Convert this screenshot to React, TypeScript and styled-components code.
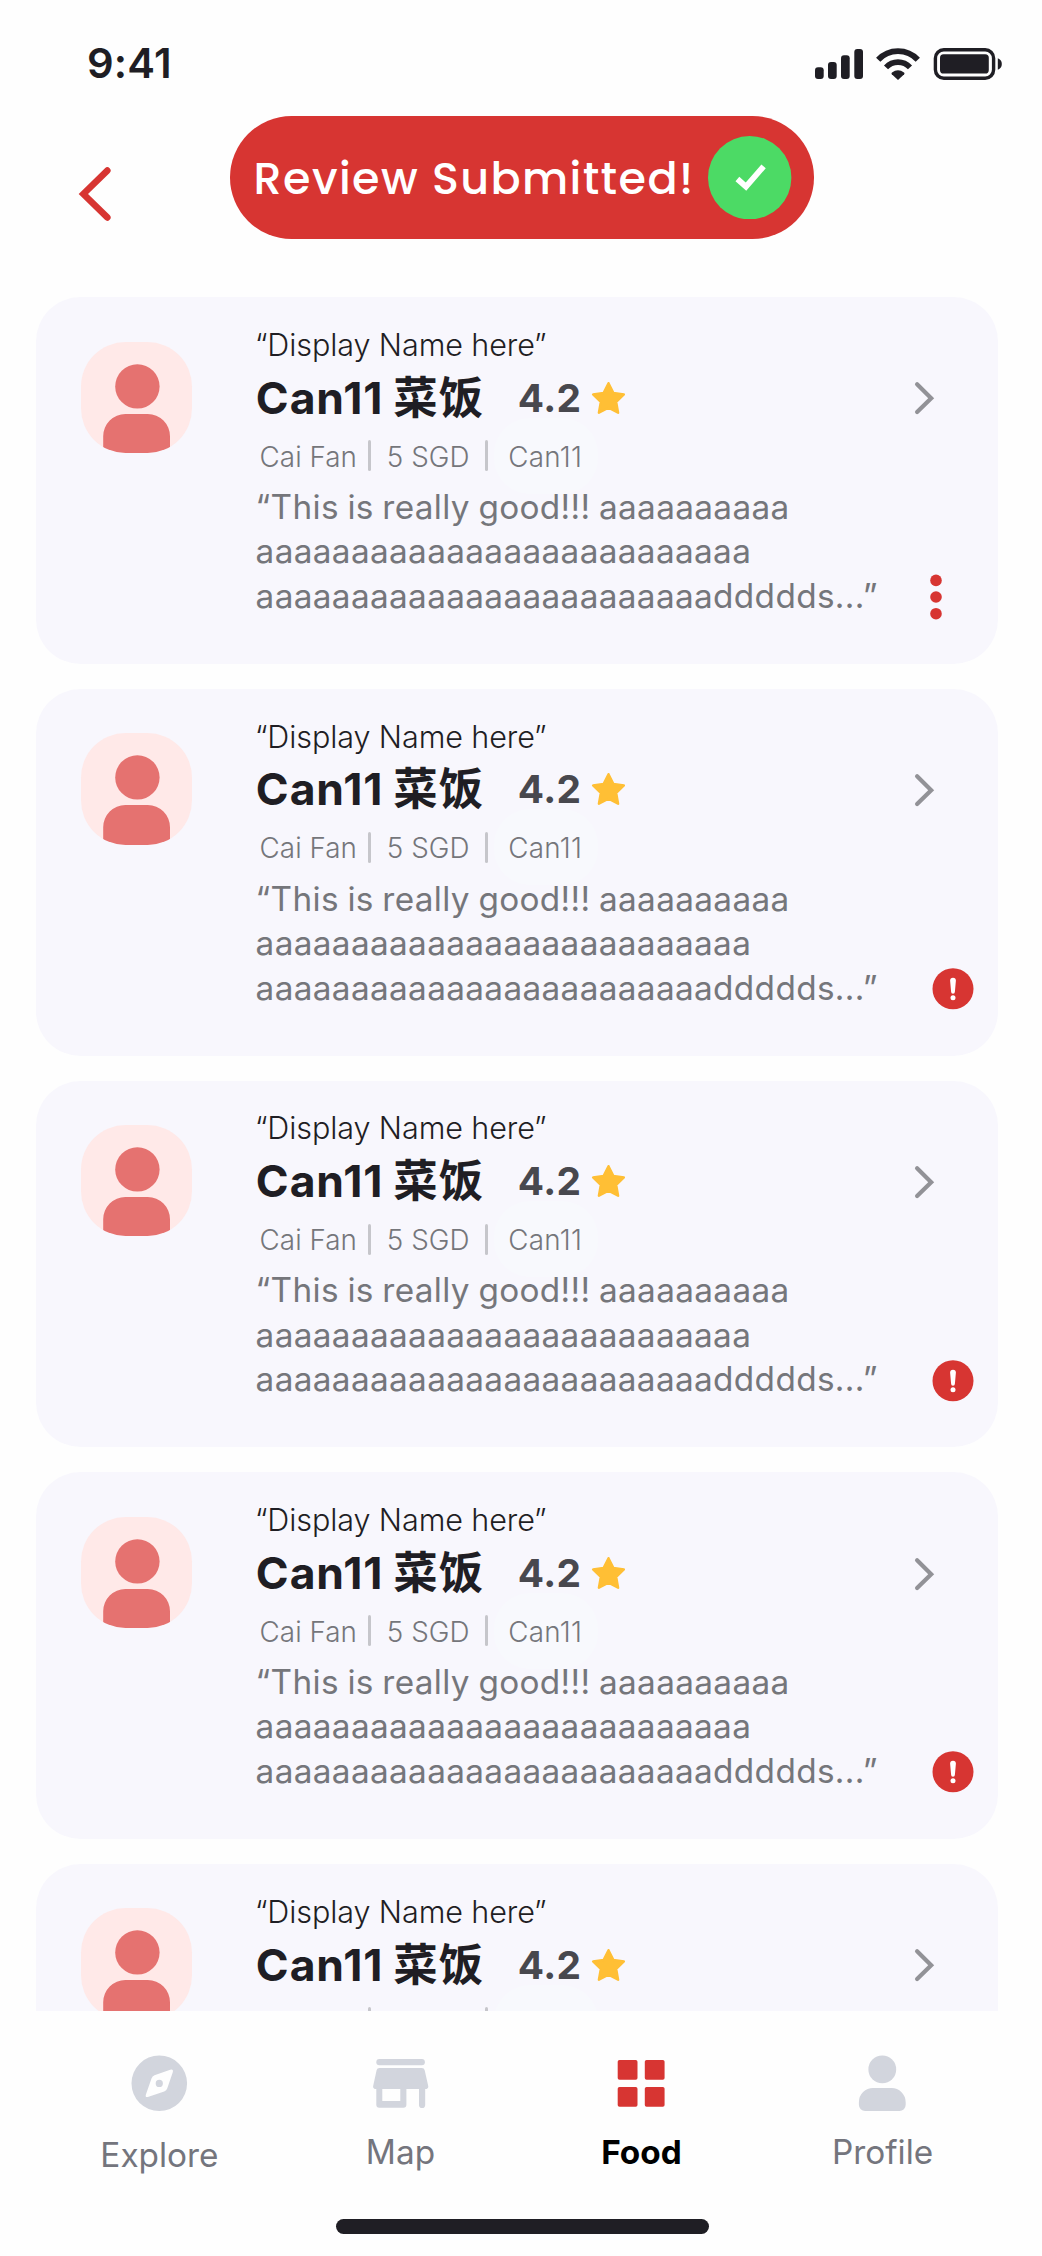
import React from "react";
import styled, { createGlobalStyle } from "styled-components";

const colors = {
  ink: "#1f1e24",
  red: "#d73532",
  card: "#f8f7fd",
  muted: "#75767b",
  navIdle: "#d2d5dd",
};

const GlobalStyle = createGlobalStyle`
  *, *::before, *::after { box-sizing: border-box; }
  body { margin: 0; background: #fefefe; }
`;

const Screen = styled.main`
  display: flex;
  flex-direction: column;
  width: 1042px;
  height: 2256px;
  overflow: hidden;
  background: #fefefe;
  color: ${colors.ink};
  font-family: Inter, "Noto Sans CJK SC", sans-serif;
`;

const StatusBar = styled.header`
  display: flex;
  justify-content: space-between;
  flex: none;
  height: 116.3px;
  padding: 48px 40px 0 87px;
`;

const Clock = styled.time`
  margin-top: -10px;
  font-size: 41.68px;
  line-height: 50px;
  font-weight: 600;
  letter-spacing: 0.2px;
`;

const StatusIcons = styled.svg`
  display: block;
  width: 187px;
  height: 32px;
`;

const TopBar = styled.div`
  display: flex;
  align-items: flex-start;
  flex: none;
  height: 181px;
  padding-left: 78px;
`;

const BackButton = styled.button`
  width: 34px;
  height: 56px;
  margin: 50px 118.3px 0 0;
  padding: 0;
  border: 0;
  background: none;

  svg { display: block; }
`;

const Toast = styled.div`
  display: flex;
  align-items: center;
  justify-content: space-between;
  width: 583.5px;
  height: 122.5px;
  padding: 0 22.2px 0 23.3px;
  border-radius: 62px;
  background: ${colors.red};
`;

const ToastText = styled.span`
  padding-top: 3px;
  color: #fff;
  font-family: Poppins, Inter, sans-serif;
  font-size: 44.46px;
  font-weight: 500;
  line-height: 60px;
  letter-spacing: 1.4px;
  white-space: nowrap;
`;

const Round = styled.svg`
  display: block;
  flex: none;
  width: 83.4px;
  height: 83.4px;
`;

const List = styled.section`
  display: flex;
  flex-direction: column;
  flex: none;
  gap: 24.9px;
  height: 1713.7px;
  padding: 0 44.5px 0 36.1px;
  overflow: hidden;
`;

const Card = styled.article`
  display: grid;
  grid-template-columns: 111.2px minmax(0, 1fr) 72px;
  column-gap: 63.2px;
  flex: none;
  height: 366.8px;
  padding-left: 44.5px;
  border-radius: 44.5px;
  background: ${colors.card};
`;

const Avatar = styled.svg`
  display: block;
  width: 111.2px;
  height: 111.2px;
  margin-top: 44.4px;
  border-radius: 44.5px;
  background: #ffe9e8;
`;

const Content = styled.div`
  padding-top: 25.7px;
  white-space: nowrap;
`;

const DisplayName = styled.div`
  font-size: 30.57px;
  font-weight: 300;
  line-height: 44.8px;
  letter-spacing: -0.1px;
`;

const TitleRow = styled.div`
  display: flex;
  align-items: center;
  height: 60px;
  padding-left: 0.9px;
`;

const Title = styled.h2`
  width: 262px;
  margin: 0;
  font-size: 44.46px;
  font-weight: 700;
  line-height: 60px;
  letter-spacing: 0.9px;
  word-spacing: -1.4px;
`;

const Rating = styled.span`
  margin-right: 9.4px;
  color: #48484e;
  font-size: 38.9px;
  font-weight: 700;
  line-height: 60px;
  letter-spacing: 0.3px;
`;

const Star = styled.svg`
  display: block;
  width: 35px;
  height: 34px;
`;

const Meta = styled.div`
  display: flex;
  align-items: center;
  height: 42px;
  margin-top: 8px;
  padding-left: 4.6px;
  color: ${colors.muted};
  font-size: 27.79px;
  font-weight: 300;
  line-height: 42px;
`;

const Tag = styled.span<{ $width: number; $halo?: boolean }>`
  position: relative;
  z-index: 0;
  width: ${(p) => p.$width}px;
  letter-spacing: ${(p) => (p.$halo ? 0.3 : 0.05)}px;

  &::before {
    content: "";
    display: ${(p) => (p.$halo ? "block" : "none")};
    position: absolute;
    z-index: -1;
    left: -14px;
    top: -18px;
    width: 104px;
    height: 76px;
    border-radius: 36px;
    background: #f8f9fd;
  }
`;

const Separator = styled.i<{ $after: number }>`
  width: 3px;
  height: 31px;
  margin: -2px ${(p) => p.$after}px 0 0;
  border-radius: 1.5px;
  background: #c6c6cb;
`;

const Review = styled.p`
  margin: 7.2px 0 0 0.6px;
  color: ${colors.muted};
  font-size: 33.34px;
  line-height: 44.46px;
  letter-spacing: 0.35px;
  word-spacing: -1.2px;
  white-space: pre;
`;

const Side = styled.div`
  display: flex;
  flex-direction: column;
  align-items: flex-start;
  height: 366.8px;
  margin-left: -34px;
  padding-top: 84.2px;
`;

const Chevron = styled.svg`
  display: block;
  width: 22px;
  height: 34px;
  margin-left: 22.5px;
`;

const Action = styled.button<{ $left: number }>`
  width: 42px;
  height: 48px;
  margin: 157.8px 0 0 ${(p) => p.$left}px;
  padding: 0;
  border: 0;
  background: none;

  svg { display: block; }
`;

const TabBar = styled.nav`
  display: grid;
  grid-template-columns: repeat(4, 1fr);
  flex: none;
  height: 208px;
  padding: 39px 38.9px 0;
`;

const Tab = styled.a<{ $active?: boolean; $gap?: number }>`
  display: flex;
  flex-direction: column;
  align-items: center;
  gap: ${(p) => p.$gap ?? 13.7}px;
  color: ${(p) => (p.$active ? "#000" : "#74757d")};
  font-size: 33.34px;
  font-weight: ${(p) => (p.$active ? 700 : 400)};
  line-height: 44.46px;

  svg {
    display: block;
    width: 66.7px;
    height: 66.7px;
    fill: ${(p) => (p.$active ? colors.red : colors.navIdle)};
  }
`;

const HomeIndicator = styled.div`
  flex: none;
  width: 372.5px;
  height: 14.7px;
  margin-left: 336px;
  border-radius: 8px;
  background: ${colors.ink};
`;

const StatusGlyphs = () => (
  <StatusIcons viewBox="0 0 187 32" fill={colors.ink}>
    <rect x="0" y="19.3" width="8.7" height="11.7" rx="3" />
    <rect x="13" y="14" width="8.7" height="17" rx="3" />
    <rect x="26" y="7.3" width="8.7" height="23.7" rx="3" />
    <rect x="39.3" y="1" width="8.7" height="30" rx="3" />
    <g fill="none" stroke={colors.ink}>
      <path d="M63.2 11.8A27 27 0 0 1 102.8 11.8" strokeWidth="5.8" />
      <path d="M71 19.3A16.5 16.5 0 0 1 95 19.3" strokeWidth="5.6" />
    </g>
    <path d="M83 32L76.8 26.3Q76 25.3 77 24.5Q83 20 89 24.5Q90 25.3 89.2 26.3Z" />
    <rect x="120.4" y="1.8" width="58.2" height="28.4" rx="8.4" fill="none" stroke={colors.ink} strokeWidth="3.4" />
    <rect x="125" y="6.3" width="48.8" height="19.2" rx="3.6" />
    <path d="M182.8 10.2A6.2 6.2 0 0 1 182.8 21.8Z" />
  </StatusIcons>
);

const PersonAvatar = () => (
  <Avatar viewBox="0 0 111.2 111.2" fill="#e57270">
    <circle cx="56.4" cy="44.4" r="22.2" />
    <path d="M22.2 112V94.2A22.2 22.2 0 0 1 44.4 72H66.8A22.2 22.2 0 0 1 89 94.2V112Z" />
  </Avatar>
);

const MoreIcon = () => (
  <svg width="42" height="48" viewBox="0 0 42 48" fill={colors.red}>
    <circle cx="21" cy="7.4" r="5.8" />
    <circle cx="21" cy="24" r="5.8" />
    <circle cx="21" cy="40.7" r="5.8" />
  </svg>
);

const AlertIcon = () => (
  <svg width="42" height="48" viewBox="0 0 42 48">
    <circle cx="21" cy="23.8" r="20.5" fill={colors.red} />
    <path d="M18.1 15.6a2.9 2.9 0 0 1 5.8 0L22.9 26.8a1.9 1.9 0 0 1-3.8 0Z" fill="#fff" />
    <circle cx="21" cy="32.8" r="2.5" fill="#fff" />
  </svg>
);

type ReviewItem = { flagged: boolean; text?: string };

const sampleText =
  "“This is really good!!! aaaaaaaaaa\n" + "a".repeat(26) + "\n" + "a".repeat(24) + "ddddds...”";

const reviews: ReviewItem[] = [
  { flagged: false, text: sampleText },
  { flagged: true, text: sampleText },
  { flagged: true, text: sampleText },
  { flagged: true, text: sampleText },
  { flagged: true },
];

const ReviewCard = ({ flagged, text }: ReviewItem) => (
  <Card>
    <PersonAvatar />
    <Content>
      <DisplayName>“Display Name here”</DisplayName>
      <TitleRow>
        <Title>Can11 菜饭</Title>
        <Rating>4.2</Rating>
        <Star viewBox="0 0 35 34">
          <path
            d="M17.5 2.2L22.3 11.9L32.9 13.5L25.2 21L27.1 31.8L17.5 26.8L7.9 31.8L9.8 21L2.1 13.5L12.7 11.9Z"
            fill="#ffbf35"
            stroke="#ffbf35"
            strokeWidth="2.4"
            strokeLinejoin="round"
          />
        </Star>
      </TitleRow>
      <Meta>
        <Tag $width={108.6}>Cai Fan</Tag>
        <Separator $after={15.6} />
        <Tag $width={98.2}>5 SGD</Tag>
        <Separator $after={20.2} />
        <Tag $width={80} $halo>Can11</Tag>
      </Meta>
      {text && <Review>{text}</Review>}
    </Content>
    <Side>
      <Chevron viewBox="0 0 22 34" fill="none" stroke="#929297" strokeWidth="4.2" strokeLinecap="round">
        <path d="M3.1 3.2L17.2 17.2L3.1 31" />
      </Chevron>
      <Action $left={flagged ? 40.3 : 23.5} aria-label={flagged ? "Report" : "More"}>
        {flagged ? <AlertIcon /> : <MoreIcon />}
      </Action>
    </Side>
  </Card>
);

export default function App() {
  return (
    <Screen>
      <GlobalStyle />
      <StatusBar>
        <Clock>9:41</Clock>
        <StatusGlyphs />
      </StatusBar>
      <TopBar>
        <BackButton aria-label="Back">
          <svg width="34" height="56" viewBox="0 0 34 56" fill="none" stroke={colors.red} strokeWidth="6.6" strokeLinecap="round">
            <path d="M29.3 4.6L5.4 28L29.3 51.4" />
          </svg>
        </BackButton>
        <Toast role="status">
          <ToastText>Review Submitted!</ToastText>
          <Round viewBox="0 0 83.4 83.4">
            <circle cx="41.7" cy="41.7" r="41.7" fill="#4cda65" />
            <path d="M29.4 43L38 50.6L55.6 30.4" fill="none" stroke="#fff" strokeWidth="5.8" />
          </Round>
        </Toast>
      </TopBar>
      <List>
        {reviews.map((review, index) => (
          <ReviewCard key={index} {...review} />
        ))}
      </List>
      <TabBar>
        <Tab $gap={16.7}>
          <svg viewBox="0 0 66.7 66.7">
            <path
              fillRule="evenodd"
              d="M33.3 5.5a27.8 27.8 0 1 0 0 55.6a27.8 27.8 0 0 0 0-55.6ZM44.2 19.7Q47.8 18.6 46.7 22.6L41.3 38.2Q40.6 40.6 38.2 41.4L22.6 46.8Q18.7 48 20 44.2L25.5 28.4Q26.3 26.2 28.5 25.3ZM33.3 29.8a3.6 3.6 0 1 0 0 7.2a3.6 3.6 0 0 0 0-7.2Z"
            />
          </svg>
          Explore
        </Tab>
        <Tab>
          <svg viewBox="0 0 66.7 66.7">
            <rect x="9.3" y="9" width="48.6" height="6.2" rx="3" />
            <path
              fillRule="evenodd"
              d="M12.5 18H54.8Q57.2 18 57.7 20.2L61.3 36.2Q61.5 39 58.2 39V54.9A3 3 0 0 1 52 54.9V39H39.4V54.8Q39.4 57.8 36.4 57.8H12.3Q9.3 57.8 9.3 54.8V39Q5.8 39 6.1 36.2L9.6 20.2Q10.1 18 12.5 18ZM15.3 39V51H33.3V39Z"
            />
          </svg>
          Map
        </Tab>
        <Tab $active>
          <svg viewBox="0 0 66.7 66.7">
            <rect x="9.7" y="10" width="19.8" height="19.8" rx="1.8" />
            <rect x="36.8" y="10" width="19.8" height="19.8" rx="1.8" />
            <rect x="9.7" y="37" width="19.8" height="19.8" rx="1.8" />
            <rect x="36.8" y="37" width="19.8" height="19.8" rx="1.8" />
          </svg>
          Food
        </Tab>
        <Tab>
          <svg viewBox="0 0 66.7 66.7">
            <circle cx="33.3" cy="19.4" r="13.9" />
            <path d="M24.3 38H42.5A14.2 14.2 0 0 1 56.7 52.2V54.8A6.2 6.2 0 0 1 50.5 61H16.1A6.2 6.2 0 0 1 9.9 54.8V52.2A14.2 14.2 0 0 1 24.3 38Z" />
          </svg>
          Profile
        </Tab>
      </TabBar>
      <HomeIndicator />
    </Screen>
  );
}
